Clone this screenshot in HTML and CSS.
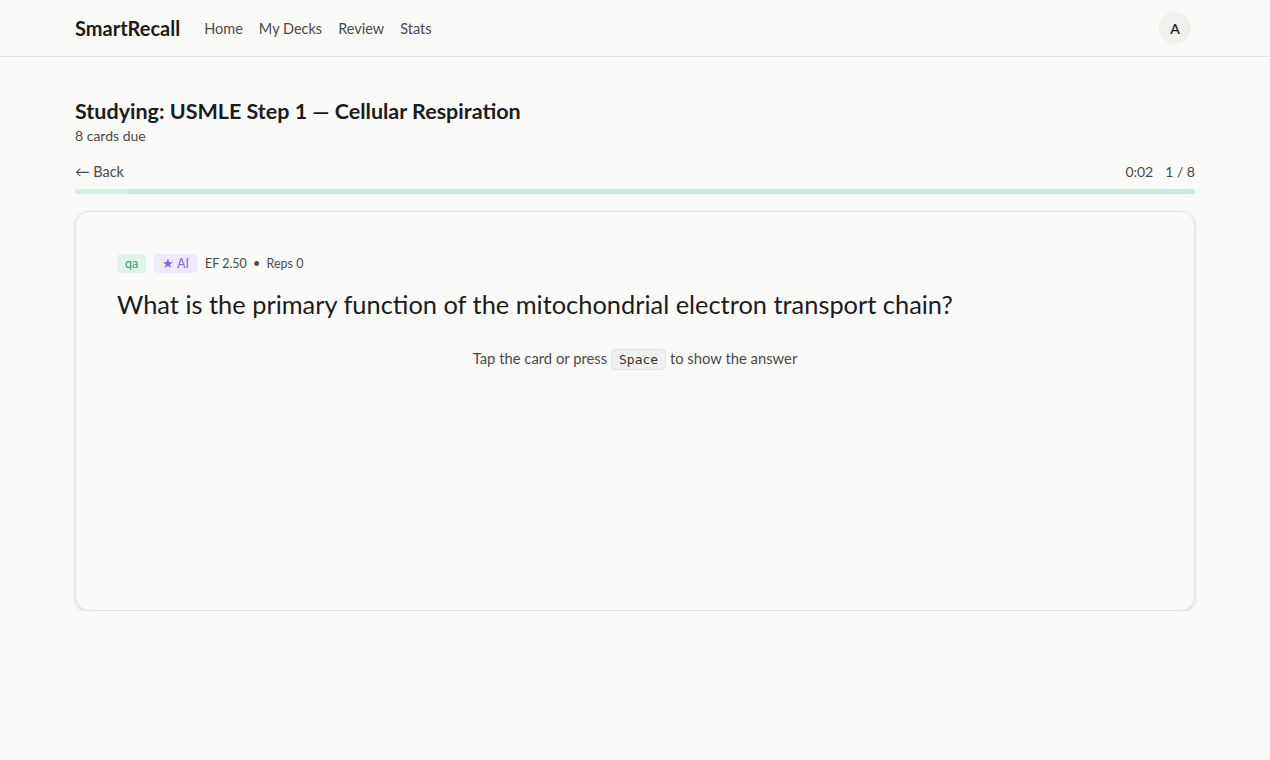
FILE: index.html
```html
<!DOCTYPE html>
<html lang="en">
<head>
    <meta charset="UTF-8">
    <meta name="viewport" content="width=device-width, initial-scale=1.0">
    <title>SmartRecall - Study</title>
    <link rel="stylesheet" href="styles.css">
</head>
<body>
    <header class="topbar">
        <div class="topbar-inner">
            <div class="brand">SmartRecall</div>
            <nav class="nav">
                <a href="#">Home</a>
                <a href="#">My Decks</a>
                <a href="#">Review</a>
                <a href="#">Stats</a>
            </nav>
            <div class="avatar">A</div>
        </div>
    </header>

    <main class="page">
        <h1 class="title">Studying: USMLE Step 1 — Cellular Respiration</h1>
        <p class="subtitle">8 cards due</p>

        <div class="session-bar">
            <a href="#" class="back">&larr; Back</a>
            <div class="session-meta">
                <span>0:02</span>
                <span>1 / 8</span>
            </div>
        </div>
        <div class="progress"><div class="progress-fill" style="width: 4.7%"></div></div>

        <section class="card">
            <div class="card-tags">
                <span class="tag tag-qa">qa</span>
                <span class="tag tag-ai">&#9733; AI</span>
                <span class="card-stats">EF 2.50 <span class="dot">&bull;</span> Reps 0</span>
            </div>
            <h2 class="question">What is the primary function of the mitochondrial electron transport chain?</h2>
            <p class="hint">Tap the card or press <kbd>Space</kbd> to show the answer</p>
        </section>
    </main>
</body>
</html>
```

FILE: styles.css
```css
body {
    margin: 0;
    background-color: #fafaf9;
    color: #1c1c1c;
    font-family: 'Lato', 'Noto Sans', sans-serif;
}
.topbar {
    border-bottom: 1px solid #e4e4e2;
}
.topbar-inner {
    max-width: 1120px;
    margin: 0 auto;
    height: 56px;
    display: flex;
    align-items: center;
}
.brand {
    font-size: 20px;
    font-weight: 700;
    color: #1c1c1c;
    margin-right: 24px;
}
.nav {
    display: flex;
    gap: 16px;
}
.nav a {
    font-size: 14.5px;
    color: #4a4a4a;
    text-decoration: none;
}
.avatar {
    margin-left: auto;
    margin-right: 4px;
    width: 32px;
    height: 32px;
    border-radius: 50%;
    background: #f0f0ed;
    display: flex;
    align-items: center;
    justify-content: center;
    font-size: 14px;
    font-weight: 600;
}
.page {
    max-width: 1120px;
    margin: 0 auto;
    padding-top: 39px;
}
.title {
    margin: 0;
    font-size: 21.5px;
    font-weight: 700;
    line-height: 30px;
}
.subtitle {
    margin: 0;
    font-size: 14px;
    color: #4a4a4a;
    line-height: 20px;
}
.session-bar {
    display: flex;
    justify-content: space-between;
    align-items: center;
    margin-top: 17px;
    font-size: 14.5px;
}
.back {
    color: #4a4a4a;
    text-decoration: none;
}
.session-meta {
    display: flex;
    gap: 12px;
    color: #4a4a4a;
    font-size: 14px;
}
.progress {
    margin-top: 9px;
    height: 5px;
    border-radius: 3px;
    background: #c9ecdd;
    overflow: hidden;
}
.progress-fill {
    height: 100%;
    background: #d3f1e4;
}
.card {
    margin-top: 17px;
    min-height: 314px;
    padding: 42px 41px 42px;
    border: 1px solid #e3e3e1;
    border-radius: 14px;
    box-shadow: 0 2px 4px rgba(0, 0, 0, 0.1);
    background: #fafaf9;
}
.card-tags {
    display: flex;
    align-items: center;
    gap: 8px;
    font-size: 12.5px;
}
.tag {
    padding: 2px 8px;
    border-radius: 4px;
    line-height: 15px;
}
.tag-qa {
    background: #dff4ea;
    color: #2da673;
}
.tag-ai {
    background: #efe9fc;
    color: #8b5cf6;
}
.card-stats {
    color: #4a4a4a;
}
.dot {
    margin: 0 3px;
}
.question {
    margin: 15px 0 0;
    font-size: 25.4px;
    font-weight: 400;
    line-height: 32px;
}
.hint {
    margin: 29px 0 0;
    text-align: center;
    font-size: 14.8px;
    color: #4a4a4a;
}
kbd {
    font-family: 'DejaVu Sans Mono', monospace;
    font-size: 13px;
    background: #f0f0ee;
    border: 1px solid #e4e4e2;
    border-radius: 4px;
    padding: 2px 7px;
    color: #333;
}
```
